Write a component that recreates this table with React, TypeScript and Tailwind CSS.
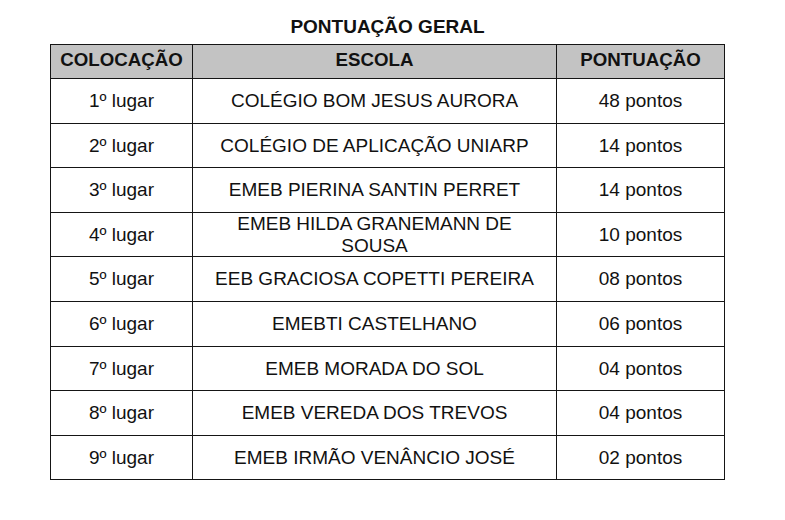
import React from "react";

const rows: { pos: string; school: string; pts: string; h: string }[] = [
  { pos: "1º lugar", school: "COLÉGIO BOM JESUS AURORA", pts: "48 pontos", h: "h-[45px]" },
  { pos: "2º lugar", school: "COLÉGIO DE APLICAÇÃO UNIARP", pts: "14 pontos", h: "h-[44px]" },
  { pos: "3º lugar", school: "EMEB PIERINA SANTIN PERRET", pts: "14 pontos", h: "h-[45px]" },
  { pos: "4º lugar", school: "EMEB HILDA GRANEMANN DE SOUSA", pts: "10 pontos", h: "h-[44px]" },
  { pos: "5º lugar", school: "EEB GRACIOSA COPETTI PEREIRA", pts: "08 pontos", h: "h-[45px]" },
  { pos: "6º lugar", school: "EMEBTI CASTELHANO", pts: "06 pontos", h: "h-[45px]" },
  { pos: "7º lugar", school: "EMEB MORADA DO SOL", pts: "04 pontos", h: "h-[44px]" },
  { pos: "8º lugar", school: "EMEB VEREDA DOS TREVOS", pts: "04 pontos", h: "h-[45px]" },
  { pos: "9º lugar", school: "EMEB IRMÃO VENÂNCIO JOSÉ", pts: "02 pontos", h: "h-[44px]" },
];

export default function App() {
  return (
    <div
      className="w-[785px] h-[520px] bg-white text-[#111] overflow-hidden"
      style={{ fontFamily: '"Liberation Sans", Arial, sans-serif' }}
    >
      <div className="pt-[16px] ml-[50px] w-[675px]">
        <div className="text-center font-bold text-[19px] leading-[22px] mb-[6px]">
          PONTUAÇÃO GERAL
        </div>
        <div className="border-l border-t border-[#151515]">
          <div className="flex h-[34px] bg-[#c3c3c3] border-b border-[#151515] font-bold text-[18.7px] leading-[22px]">
            <div className="w-[142px] border-r border-[#151515] flex items-center justify-center pb-[3px]">
              COLOCAÇÃO
            </div>
            <div className="w-[364px] border-r border-[#151515] flex items-center justify-center pb-[3px]">
              ESCOLA
            </div>
            <div className="w-[168px] border-r border-[#151515] flex items-center justify-center pb-[3px]">
              PONTUAÇÃO
            </div>
          </div>
          {rows.map((r) => (
            <div
              key={r.pos}
              className={`flex ${r.h} border-b border-[#151515] text-[19px] leading-[22px]`}
            >
              <div className="w-[142px] border-r border-[#151515] flex items-center justify-center">
                {r.pos}
              </div>
              <div className="w-[364px] border-r border-[#151515] flex items-center justify-center text-center px-[16px]">
                {r.school}
              </div>
              <div className="w-[168px] border-r border-[#151515] flex items-center justify-center">
                {r.pts}
              </div>
            </div>
          ))}
        </div>
      </div>
    </div>
  );
}
